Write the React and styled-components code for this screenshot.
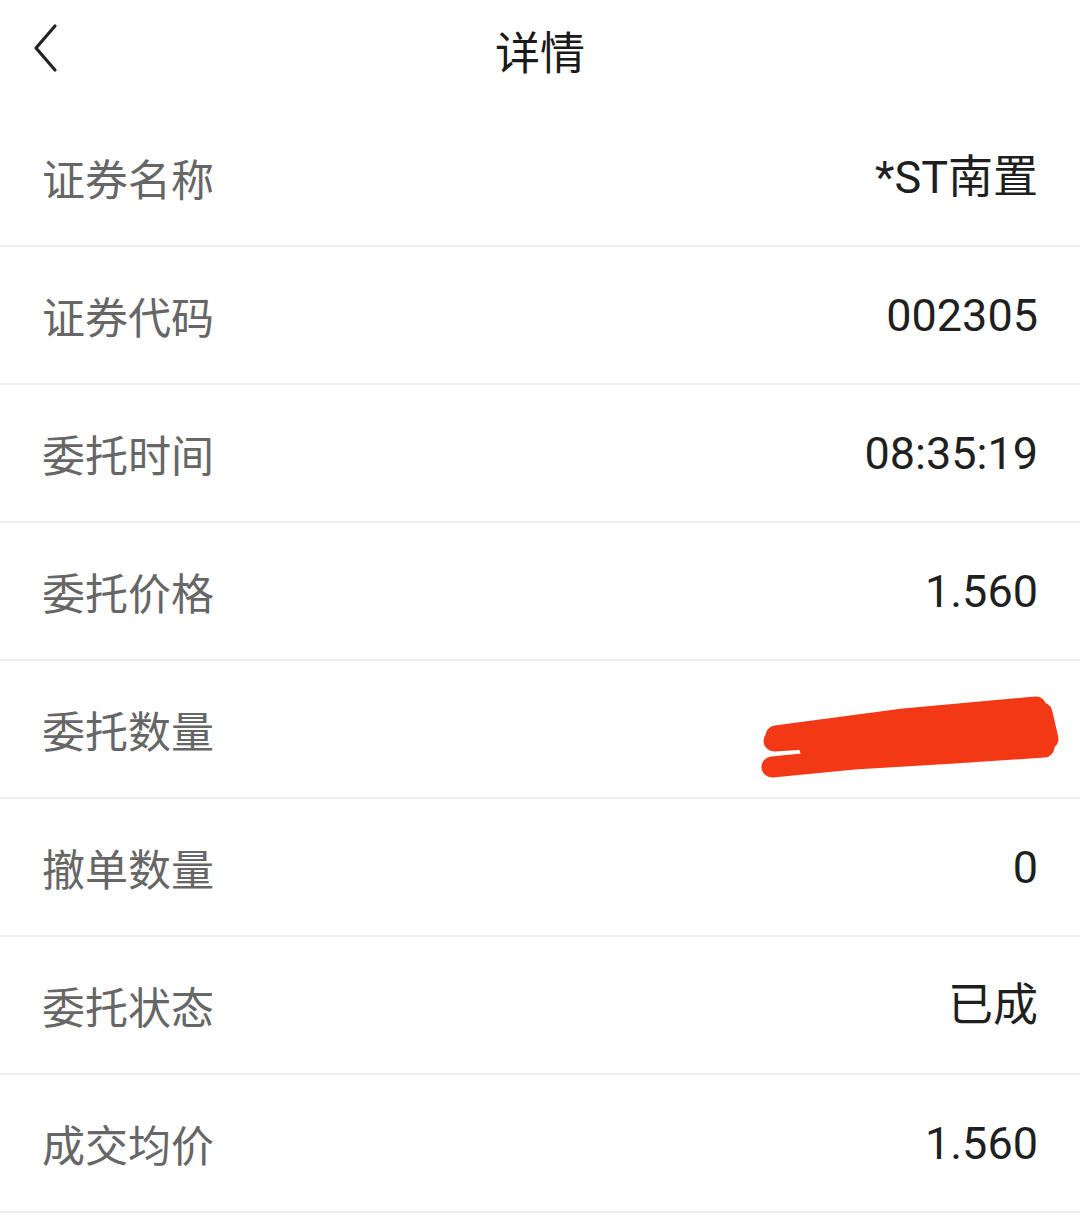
import React from "react";
import styled, { createGlobalStyle } from "styled-components";

const Global = createGlobalStyle`
  html, body { margin: 0; padding: 0; background: #ffffff; }
  body { font-family: Roboto, "Noto Sans CJK SC", sans-serif; }
`;

const Page = styled.div`
  width: 1080px;
  min-height: 1224px;
  background: #ffffff;
`;

const Header = styled.header`
  position: relative;
  height: 100px;
  margin-bottom: 9px;
  display: flex;
  align-items: center;
  justify-content: center;
`;

const Back = styled.button`
  position: absolute;
  left: 25px;
  top: 19px;
  width: 40px;
  height: 60px;
  padding: 0;
  border: none;
  background: none;
  display: flex;
  align-items: center;
  justify-content: center;
`;

const Title = styled.h1`
  margin: 0;
  font-family: "Noto Sans CJK SC", sans-serif;
  font-size: 45px;
  font-weight: 400;
  color: #1a1a1a;
  line-height: 1;
`;

const List = styled.div`
  display: flex;
  flex-direction: column;
`;

const Row = styled.div`
  height: 136px;
  border-bottom: 2px solid #f0f0f0;
  display: flex;
  align-items: center;
  justify-content: space-between;
  padding: 0 42px;
`;

const Label = styled.span`
  font-family: "Noto Sans CJK SC", sans-serif;
  font-size: 43px;
  color: #666666;
  line-height: 1;
`;

const Value = styled.span`
  font-family: Roboto, "Noto Sans CJK SC", sans-serif;
  font-size: 45px;
  color: #1f1f1f;
  line-height: 1;
`;

const Scribble = styled.svg`
  margin-right: -26px;
  width: 310px;
  height: 100px;
  display: block;
`;

const rows = [
  ["证券名称", "*ST南置"],
  ["证券代码", "002305"],
  ["委托时间", "08:35:19"],
  ["委托价格", "1.560"],
  ["委托数量", null],
  ["撤单数量", "0"],
  ["委托状态", "已成"],
  ["成交均价", "1.560"],
];

function RedScribble() {
  // viewBox in page coordinates of the reference (row centre ~728)
  return (
    <Scribble viewBox="750 678 310 100">
      <g stroke="#f23814" strokeWidth="21" strokeLinecap="round" strokeLinejoin="round" fill="none">
        <path d="M772 735 L900 718 L1032 706" />
        <path d="M770 740 L900 732 L1040 726" />
        <path d="M806 748 L1040 744" />
        <path d="M1038 712 L1044 738" />
        <path d="M768 766 L850 758 L950 752 L1040 746" />
      </g>
    </Scribble>
  );
}

export default function App() {
  return (
    <Page>
      <Global />
      <Header>
        <Back aria-label="返回">
          <svg width="28" height="52" viewBox="0 0 28 52">
            <path d="M24 3 L5 25 L24 47" fill="none" stroke="#222" strokeWidth="3.2" strokeLinecap="round" strokeLinejoin="round" />
          </svg>
        </Back>
        <Title>详情</Title>
      </Header>
      <List>
        {rows.map(([label, value]) => (
          <Row key={label}>
            <Label>{label}</Label>
            {value === null ? <RedScribble /> : <Value>{value}</Value>}
          </Row>
        ))}
      </List>
    </Page>
  );
}
